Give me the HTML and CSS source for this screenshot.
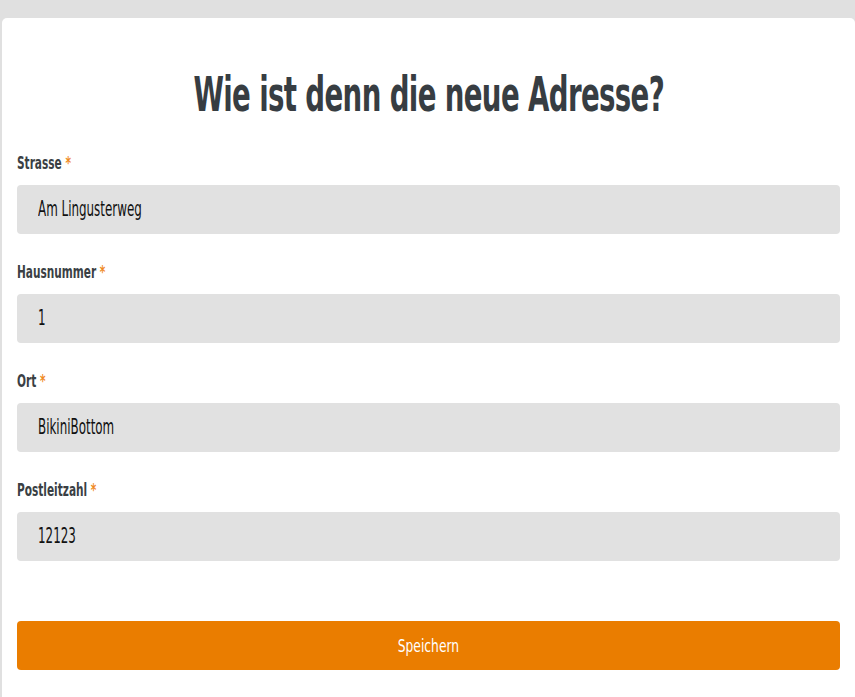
FILE: index.html
```html
<!DOCTYPE html>
<html lang="de">
<head>
<meta charset="utf-8">
<title>Adresse</title>
<link rel="stylesheet" href="styles.css">
</head>
<body>
<main class="card">
  <h1 class="title"><span class="title-text">Wie ist denn die neue Adresse?</span></h1>
  <form class="form">
    <div class="field">
      <label class="label">Strasse <span class="req">*</span></label>
      <div class="input"><span class="value">Am Lingusterweg</span></div>
    </div>
    <div class="field">
      <label class="label">Hausnummer <span class="req">*</span></label>
      <div class="input"><span class="value">1</span></div>
    </div>
    <div class="field">
      <label class="label">Ort <span class="req">*</span></label>
      <div class="input"><span class="value">BikiniBottom</span></div>
    </div>
    <div class="field">
      <label class="label">Postleitzahl <span class="req">*</span></label>
      <div class="input"><span class="value">12123</span></div>
    </div>
    <button type="button" class="btn"><span class="btn-text">Speichern</span></button>
  </form>
</main>
</body>
</html>
```

FILE: styles.css
```css
html, body {
  margin: 0;
  padding: 0;
  background: #e0e0e0;
  height: 100%;
  overflow: hidden;
}
body {
  font-family: "DejaVu Sans Condensed", "DejaVu Sans", sans-serif;
  padding-top: 18px;
  padding-left: 2px;
  box-sizing: border-box;
}
.card {
  background: #fff;
  border-radius: 5px 5px 0 0;
  padding: 52px 15px 0 15px;
  height: 679px;
  box-sizing: border-box;
}
.title {
  margin: 0 0 35px 0;
  text-align: center;
  font-size: 48px;
  font-weight: 700;
  color: #373d42;
  line-height: 48px;
}
.title-text {
  display: inline-block;
  letter-spacing: -1px;
  transform: scaleX(0.64);
  transform-origin: center;
  white-space: nowrap;
}
.form {
  display: flex;
  flex-direction: column;
}
.field {
  display: flex;
  flex-direction: column;
  margin-bottom: 28px;
}
.label {
  display: inline-block;
  align-self: flex-start;
  font-size: 17px;
  font-weight: 700;
  color: #3a3f44;
  line-height: 20px;
  margin-bottom: 12px;
  transform: scaleX(0.69);
  transform-origin: left center;
  white-space: nowrap;
}
.req { color: #ef8a1f; }
.input {
  background: #e1e1e1;
  border-radius: 4px;
  height: 49px;
  box-sizing: border-box;
  padding: 0 21px 2px 21px;
  display: flex;
  align-items: center;
  font-size: 21px;
  line-height: 24px;
  color: #111;
}
.value {
  display: inline-block;
  transform: scaleX(0.63);
  transform-origin: left center;
  white-space: nowrap;
}
.btn {
  margin-top: 32px;
  height: 49px;
  border: 0;
  border-radius: 4px;
  background: #ea7d00;
  color: #fff;
  font-family: inherit;
  font-size: 18px;
  padding: 0;
}
.btn-text {
  display: inline-block;
  transform: scaleX(0.76);
  transform-origin: center;
}
```
